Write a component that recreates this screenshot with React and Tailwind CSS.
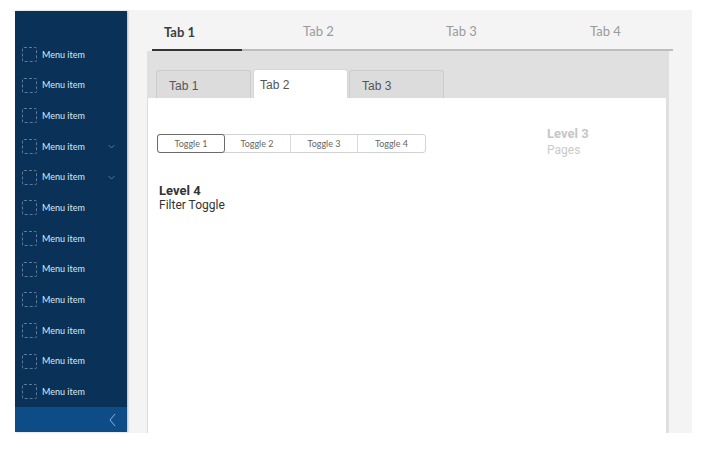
import React from 'react';

const lato = { fontFamily: 'Lato, "Open Sans", sans-serif' };

const menu = [
  { label: 'Menu item' },
  { label: 'Menu item' },
  { label: 'Menu item' },
  { label: 'Menu item', caret: true },
  { label: 'Menu item', caret: true },
  { label: 'Menu item' },
  { label: 'Menu item' },
  { label: 'Menu item' },
  { label: 'Menu item' },
  { label: 'Menu item' },
  { label: 'Menu item' },
  { label: 'Menu item' },
];

const Sidebar = () => (
  <div className="w-[112px] h-[421px] mt-[1px] bg-[#0a3258] flex flex-col shadow-[1px_0_2px_rgba(0,0,0,0.25)] z-10">
    <div className="flex-1 pt-[28px] pl-[7px] pr-[11px] overflow-hidden">
      {menu.map((m, i) => (
        <div key={i} className="h-[30.7px] flex items-center">
          <span className="w-[15px] h-[15px] border border-dashed border-[#5d7a98] rounded-[2px]" />
          <span className="ml-[5px] text-[9px] text-[#dfe7ef] flex-1" style={lato}>{m.label}</span>
          {m.caret && (
            <svg width="7" height="5" viewBox="0 0 7 5" className="mr-[1px]">
              <path d="M0.5 1 L3.5 4 L6.5 1" fill="none" stroke="#6f8aa6" strokeWidth="0.8" />
            </svg>
          )}
        </div>
      ))}
    </div>
    <div className="h-[25px] shrink-0 bg-[#0e4c88] flex items-center justify-end pr-[11px]">
      <svg width="7" height="14" viewBox="0 0 7 14">
        <path d="M6 1 L1 7 L6 13" fill="none" stroke="#8fb3d9" strokeWidth="1" />
      </svg>
    </div>
  </div>
);

const TopTabs = () => (
  <div className="ml-[25px] w-[521px] h-[41px] flex border-b-2 border-[#bdbdbd] text-[13px]" style={lato}>
    <div className="w-[90px] pl-3 pt-[7px] flex items-center font-bold text-[#3d3d3d] border-b-2 border-[#333] -mb-[2px]">Tab 1</div>
    <div className="w-[204px] pl-[61px] pt-[5px] flex items-center text-[#9a9a9a]">Tab 2</div>
    <div className="w-[144px] pt-[5px] flex items-center text-[#9a9a9a]">Tab 3</div>
    <div className="flex-1 pt-[5px] flex items-center text-[#9a9a9a]">Tab 4</div>
  </div>
);

const InnerTab = ({ label, active, className }) => (
  <div
    className={
      'w-[95px] rounded-t-[3px] border border-b-0 flex items-center pt-[2px] text-[12px] text-[#555] ' +
      (active ? 'bg-white border-[#d6d6d6] h-[29px] pl-[6px]' : 'bg-[#dcdcdc] border-[#cbcbcb] h-[28px] pl-3') +
      ' ' + className
    }
    style={{ fontFamily: '"Liberation Sans", Arial, sans-serif' }}
  >
    {label}
  </div>
);

const Toggles = () => (
  <div className="flex w-[269px] h-[19px] mt-[8px] border border-[#d2d2d2] rounded-[3px] text-[9px] text-[#666]" style={lato}>
    <div className="w-[68px] -m-[1px] border border-[#6b6b6b] rounded-[3px] flex items-center justify-center">Toggle 1</div>
    <div className="w-[67px] border-r border-[#d8d8d8] flex items-center justify-center">Toggle 2</div>
    <div className="w-[67px] border-r border-[#d8d8d8] flex items-center justify-center">Toggle 3</div>
    <div className="flex-1 flex items-center justify-center">Toggle 4</div>
  </div>
);

export default function App() {
  return (
    <div className="w-[724px] h-[455px] bg-white pt-[10px] pl-[15px] flex overflow-hidden">
      <Sidebar />
      <div className="w-[565px] h-[423px] bg-[#f4f4f4] flex flex-col">
        <TopTabs />
        <div className="ml-[20px] w-[522px] flex-1 bg-[#e0e0e0] flex flex-col pr-[3px]">
          <div className="flex items-end pt-[18px] pl-[9px]">
            <InnerTab label="Tab 1" className="w-[94px]" />
            <InnerTab label="Tab 2" active className="ml-[2px]" />
            <InnerTab label="Tab 3" className="ml-[1px]" />
          </div>
          <div className="flex-1 bg-white border-l border-[#dcdcdc] pl-[9px] pt-[28px]" style={{ fontFamily: 'Roboto, "Noto Sans", sans-serif' }}>
            <div className="flex items-start">
              <Toggles />
              <div className="ml-[121px] leading-[16px]">
                <div className="text-[13px] font-bold text-[#c6c6c6]">Level 3</div>
                <div className="text-[12px] text-[#cacaca]">Pages</div>
              </div>
            </div>
            <div className="mt-[25px] pl-[2px] leading-[15px]">
              <div className="text-[13px] font-bold text-[#333]">Level 4</div>
              <div className="text-[12px] text-[#333]">Filter Toggle</div>
            </div>
          </div>
        </div>
      </div>
    </div>
  );
}
